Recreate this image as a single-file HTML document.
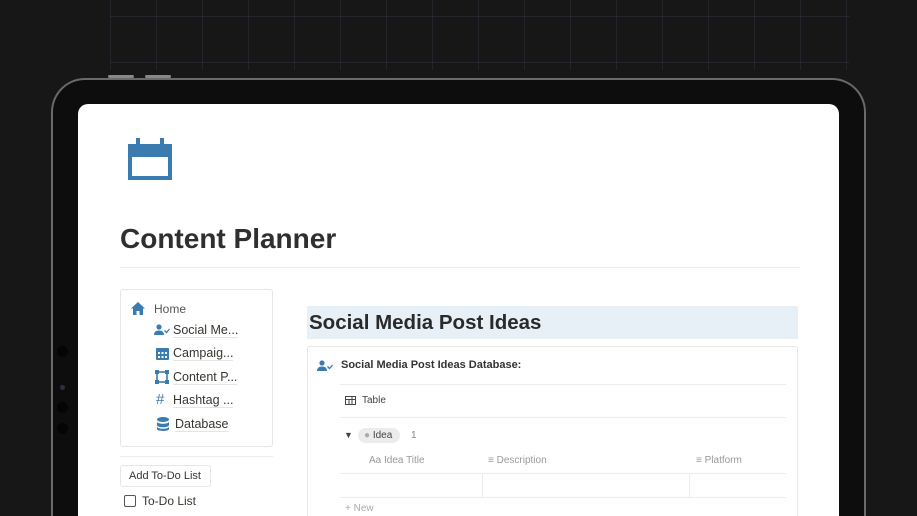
<!DOCTYPE html>
<html><head><meta charset="utf-8"><style>
*{margin:0;padding:0;box-sizing:border-box}
html,body{width:917px;height:516px;overflow:hidden}
body{background:#171717;position:relative;font-family:"Liberation Sans",sans-serif}
.grid{position:absolute;left:110px;top:0;width:740px;height:70px;
background-image:linear-gradient(90deg,rgba(90,95,130,.18) 1px,transparent 1px),linear-gradient(rgba(90,95,130,.18) 1px,transparent 1px);
background-size:46px 46px;background-position:0 16px}
.frame{position:absolute;left:51px;top:78px;width:815px;height:438px;border-radius:34px 34px 0 0;background:#0d0d0d;border:2px solid #6a6a6a;border-bottom:none}
.btn{position:absolute;top:75px;height:3px;width:26px;background:#888;border-radius:2px}
.screen{position:absolute;left:78px;top:104px;width:761px;height:412px;background:#fff;border-radius:10px 10px 0 0;overflow:hidden}
.dot{position:absolute;left:57px;width:11px;height:11px;border-radius:50%;background:#050505}
.t{position:absolute;color:#37352f;white-space:nowrap}
svg.i{position:absolute}
.u{border-bottom:1px solid #e4e4e4}
</style></head><body>
<div class="grid"></div>
<div class="btn" style="left:108px"></div><div class="btn" style="left:145px"></div>
<div class="frame"></div>
<div class="dot" style="top:346px"></div>
<div class="dot" style="top:402px"></div>
<div class="dot" style="top:423px"></div>
<div class="dot" style="top:385px;width:5px;height:5px;left:60px;background:#2a3045"></div>
<div class="screen">
 <svg style="position:absolute;left:50px;top:34px" width="44" height="42" viewBox="0 0 44 42">
  <rect x="8" y="0" width="4" height="8" fill="#3a7bb0"/><rect x="32" y="0" width="4" height="8" fill="#3a7bb0"/>
  <rect x="0" y="6" width="44" height="36" fill="#3a7bb0"/><rect x="4" y="19" width="36" height="19" fill="#fff"/>
 </svg>
 <div class="t" style="left:42px;top:119px;font-size:28px;font-weight:bold;color:#2f2f2f">Content Planner</div>
 <div style="position:absolute;left:42px;top:163px;width:680px;height:1px;background:#ececec"></div>
 <div style="position:absolute;left:42px;top:185px;width:153px;height:158px;border:1px solid #e6e6e6;border-radius:3px"></div>
 <svg class="i" style="left:53px;top:198px" width="14" height="13" viewBox="0 0 14 13"><path d="M7 0L0 6.5h2V13h3.5V9h3v4H12V6.5h2z" fill="#3a7bb0"/></svg>
 <div class="t" style="left:76px;top:198px;font-size:12px;color:#555">Home</div>
 <svg class="i" style="left:76px;top:220px" width="16" height="12" viewBox="0 0 16 12"><circle cx="5" cy="3" r="2.6" fill="#3a7bb0"/><path d="M0 11c0-3 2-4.5 5-4.5s5 1.5 5 4.5z" fill="#3a7bb0"/><path d="M10.5 6.5l2 2 3-3.5" stroke="#3a7bb0" fill="none" stroke-width="1.3"/></svg>
 <div class="t u" style="left:95px;top:219px;font-size:12.5px">Social Me...</div>
 <svg class="i" style="left:78px;top:243px" width="13" height="13" viewBox="0 0 13 13"><rect x="0" y="1" width="13" height="12" rx="1" fill="#3a7bb0"/><g fill="#fff"><rect x="2" y="5" width="2" height="2"/><rect x="5.5" y="5" width="2" height="2"/><rect x="9" y="5" width="2" height="2"/><rect x="2" y="9" width="2" height="2"/><rect x="5.5" y="9" width="2" height="2"/><rect x="9" y="9" width="2" height="2"/></g></svg>
 <div class="t u" style="left:95px;top:242px;font-size:12.5px">Campaig...</div>
 <svg class="i" style="left:77px;top:266px" width="14" height="14" viewBox="0 0 14 14"><rect x="2" y="2" width="10" height="10" fill="none" stroke="#3a7bb0" stroke-width="1.6"/><g fill="#3a7bb0"><rect x="0" y="0" width="4" height="4"/><rect x="10" y="0" width="4" height="4"/><rect x="0" y="10" width="4" height="4"/><rect x="10" y="10" width="4" height="4"/></g></svg>
 <div class="t u" style="left:95px;top:266px;font-size:12.5px">Content P...</div>
 <div class="t" style="left:78px;top:287px;font-size:15px;color:#3a7bb0">#</div>
 <div class="t u" style="left:95px;top:289px;font-size:12.5px">Hashtag ...</div>
 <svg class="i" style="left:79px;top:313px" width="12" height="14" viewBox="0 0 12 14"><ellipse cx="6" cy="2.5" rx="6" ry="2.5" fill="#3a7bb0"/><path d="M0 4.5c0 3 12 3 12 0V8c0 3-12 3-12 0zM0 9.5c0 3 12 3 12 0V12c0 2.6-12 2.6-12 0z" fill="#3a7bb0"/></svg>
 <div class="t u" style="left:97px;top:313px;font-size:12.5px">Database</div>
 <div style="position:absolute;left:42px;top:352px;width:153px;height:1px;background:#ececec"></div>
 <div style="position:absolute;left:42px;top:361px;width:91px;height:22px;border:1px solid #e6e6e6;border-radius:3px"></div>
 <div class="t" style="left:51px;top:366px;font-size:11px">Add To-Do List</div>
 <div style="position:absolute;left:46px;top:391px;width:12px;height:12px;border:1.5px solid #555;border-radius:2px"></div>
 <div class="t" style="left:64px;top:390px;font-size:12px">To-Do List</div>
 <div style="position:absolute;left:229px;top:202px;width:491px;height:33px;background:#e7f0f6"></div>
 <div class="t" style="left:231px;top:207px;font-size:20.5px;font-weight:bold;color:#2a2a2a">Social Media Post Ideas</div>
 <div style="position:absolute;left:229px;top:242px;width:491px;height:180px;border:1px solid #e6e6e6;border-radius:3px"></div>
 <svg class="i" style="left:239px;top:256px" width="16" height="12" viewBox="0 0 16 12"><circle cx="5" cy="3" r="2.6" fill="#3a7bb0"/><path d="M0 11c0-3 2-4.5 5-4.5s5 1.5 5 4.5z" fill="#3a7bb0"/><path d="M10.5 6.5l2 2 3-3.5" stroke="#3a7bb0" fill="none" stroke-width="1.3"/></svg>
 <div class="t" style="left:263px;top:255px;font-size:11px;font-weight:bold;color:#333">Social Media Post Ideas Database:</div>
 <div style="position:absolute;left:262px;top:280px;width:446px;height:1px;background:#ececec"></div>
 <svg class="i" style="left:267px;top:292px" width="11" height="9" viewBox="0 0 11 9"><rect x=".5" y=".5" width="10" height="8" fill="none" stroke="#444"/><path d="M.5 3.5h10M4 3.5v5M7 .5v8" stroke="#444"/></svg>
 <div class="t" style="left:284px;top:291px;font-size:10px;color:#444">Table</div>
 <div style="position:absolute;left:262px;top:313px;width:446px;height:1px;background:#ececec"></div>
 <div class="t" style="left:266px;top:326px;font-size:9px;color:#444">&#9660;</div>
 <div style="position:absolute;left:280px;top:324px;width:42px;height:15px;background:#ececec;border-radius:8px"></div>
 <div class="t" style="left:286px;top:326px;font-size:10px;color:#444"><span style="color:#aaa">&#9679;</span> Idea</div>
 <div class="t" style="left:333px;top:326px;font-size:10px;color:#888">1</div>
 <div class="t" style="left:291px;top:351px;font-size:10px;color:#999">Aa Idea Title</div>
 <div class="t" style="left:410px;top:351px;font-size:10px;color:#999">&#8801; Description</div>
 <div class="t" style="left:618px;top:351px;font-size:10px;color:#999">&#8801; Platform</div>
 <div style="position:absolute;left:262px;top:369px;width:446px;height:1px;background:#ececec"></div>
 <div style="position:absolute;left:404px;top:369px;width:1px;height:24px;background:#ececec"></div>
 <div style="position:absolute;left:611px;top:369px;width:1px;height:24px;background:#ececec"></div>
 <div style="position:absolute;left:262px;top:393px;width:446px;height:1px;background:#ececec"></div>
 <div class="t" style="left:267px;top:399px;font-size:10px;color:#aaa">+ New</div>
</div>
</body></html>
